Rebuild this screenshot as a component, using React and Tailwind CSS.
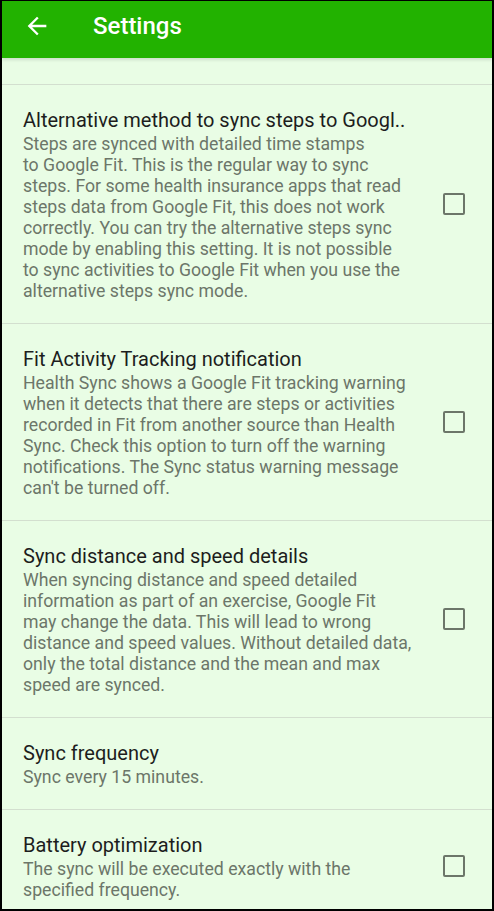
// Health Sync — Settings screen

const items = [
  {
    title: 'Alternative method to sync steps to Googl..',
    lines: [
      'Steps are synced with detailed time stamps',
      'to Google Fit. This is the regular way to sync',
      'steps. For some health insurance apps that read',
      'steps data from Google Fit, this does not work',
      'correctly. You can try the alternative steps sync',
      'mode by enabling this setting. It is not possible',
      'to sync activities to Google Fit when you use the',
      'alternative steps sync mode.',
    ],
    checkbox: true,
  },
  {
    title: 'Fit Activity Tracking notification',
    lines: [
      'Health Sync shows a Google Fit tracking warning',
      'when it detects that there are steps or activities',
      'recorded in Fit from another source than Health',
      'Sync. Check this option to turn off the warning',
      'notifications. The Sync status warning message',
      "can't be turned off.",
    ],
    checkbox: true,
  },
  {
    title: 'Sync distance and speed details',
    lines: [
      'When syncing distance and speed detailed',
      'information as part of an exercise, Google Fit',
      'may change the data. This will lead to wrong',
      'distance and speed values. Without detailed data,',
      'only the total distance and the mean and max',
      'speed are synced.',
    ],
    checkbox: true,
  },
  {
    title: 'Sync frequency',
    lines: ['Sync every 15 minutes.'],
    checkbox: false,
  },
  {
    title: 'Battery optimization',
    lines: ['The sync will be executed exactly with the', 'specified frequency.'],
    checkbox: true,
  },
];

function BackArrow() {
  return (
    <svg width="28" height="28" viewBox="0 0 24 24" fill="white">
      <path d="M20 11H7.83l5.59-5.59L12 4l-8 8 8 8 1.41-1.41L7.83 13H20v-2z" />
    </svg>
  );
}

function PrefRow({ item }) {
  return (
    <div className="flex items-center border-t border-[#d3dfcf] pl-[21px] pr-[27px] pt-[21px] pb-[21px]">
      <div className="flex-1 min-w-0">
        <div className="text-[20px] leading-[28px] text-[#1d1d1d] whitespace-nowrap">{item.title}</div>
        <div className="text-[17.7px] leading-[21px] text-[#6c7669]">
          {item.lines.map((l, i) => (
            <div key={i} className="whitespace-nowrap">{l}</div>
          ))}
        </div>
      </div>
      {item.checkbox && (
        <div className="w-[22px] h-[22px] shrink-0 rounded-[2px] border-[2.5px] border-[#6c7669]" />
      )}
    </div>
  );
}

export default function App() {
  return (
    <div
      className="w-[494px] h-[911px] overflow-hidden bg-[#e9fde5] border-t border-x-2 border-b-2 border-black flex flex-col"
      style={{ fontFamily: 'Roboto, "Noto Sans", sans-serif' }}
    >
      {/* App bar */}
      <div className="relative z-10 h-[57px] shrink-0 bg-[#22b200] flex items-center pb-[8px] shadow-[0_2px_3px_rgba(0,0,0,0.12)]">
        <div className="w-[70px] pl-[21px] flex items-center">
          <BackArrow />
        </div>
        <div className="pl-[21px] text-white text-[24px] font-medium leading-none">Settings</div>
      </div>

      {/* Tail of the previous preference */}
      <div className="h-[26px] shrink-0" />

      {items.map((item, i) => (
        <PrefRow key={i} item={item} />
      ))}
    </div>
  );
}
